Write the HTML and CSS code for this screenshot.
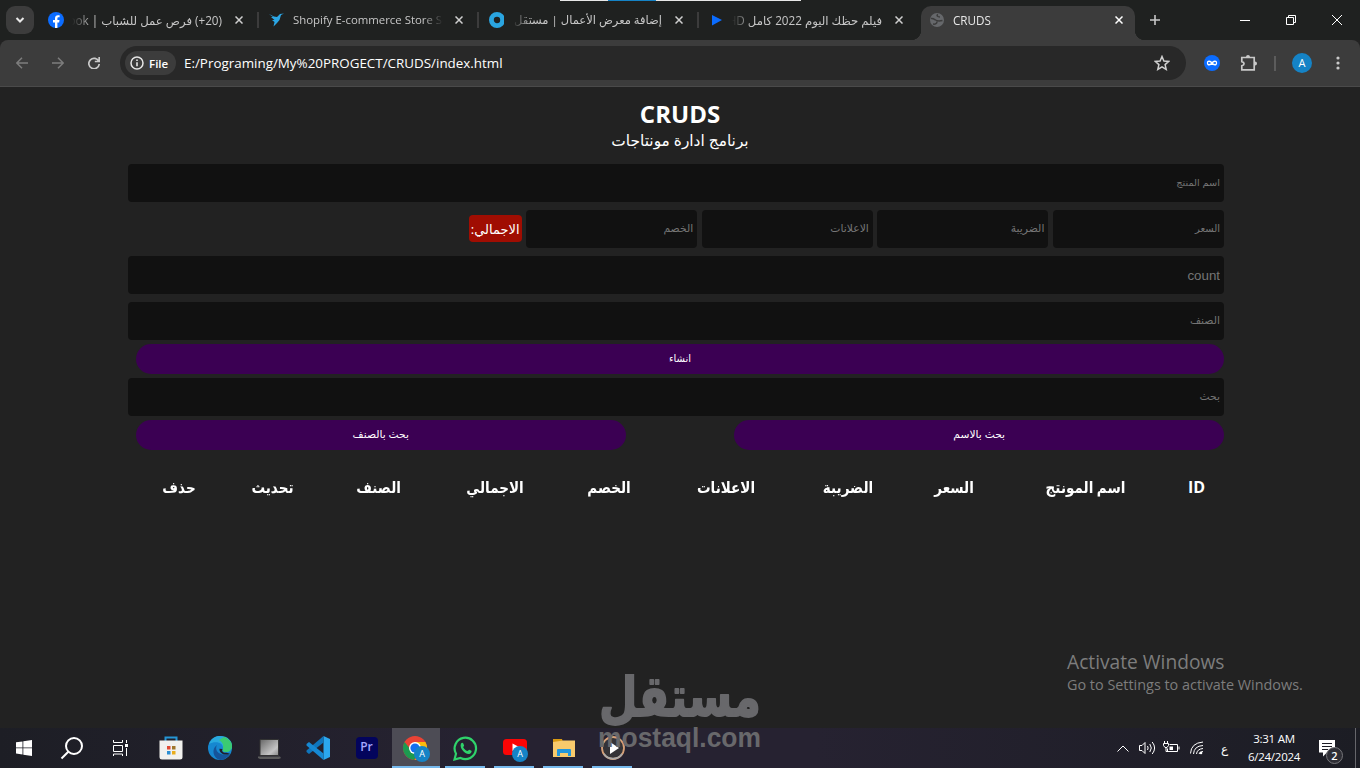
FILE: index.html
```
<!DOCTYPE html>
<html lang="ar">
<head>
    <meta charset="UTF-8">
    <meta name="viewport" content="width=device-width, initial-scale=1.0">
    <title>CRUDS</title>
    <link rel="stylesheet" href="styles.css">
</head>
<body>
    <div class="screen">
        <!-- tabs -->
        <div class="tabs">
            <div class="tab-search">
                <svg width="28" height="28" viewBox="0 0 28 28"><path d="M10.500 12l3.500 3.500 3.500-3.500" fill="none" stroke="#e8e8e8" stroke-width="2"/></svg>
            </div>
            <div class="tab">
                <svg class="favicon" viewBox="0 0 16 16"><circle cx="8" cy="8" r="8" fill="#0b6cff"/><path d="M7 16v-5.600H5V8h2V6.400C7 4.200 8.200 3.200 10 3.200l1.600.1v2h-1c-.9 0-1.200.5-1.200 1.200V8h2.100l-.4 2.400H9.400V16z" fill="#fff"/></svg>
                <span class="tab-title rtl t1" dir="rtl">(20+) فرص عمل للشباب | Facebook</span>
                <svg class="close" viewBox="0 0 8 8"><path d="M.5.5l7 7M7.500.5l-7 7"/></svg>
            </div>
            <div class="tab">
                <svg class="favicon" viewBox="0 0 16 16"><path d="M1 2l5 2.500L9 5l3-3 4-.5-3 1.500L11.500 8 9 11l-3.500 3.500L6.500 10 4 8h2.500L3 5h2z" fill="#2ba7e6"/></svg>
                <span class="tab-title t2">Shopify E-commerce Store Setup</span>
                <svg class="close" viewBox="0 0 8 8"><path d="M.5.5l7 7M7.500.5l-7 7"/></svg>
            </div>
            <div class="tab">
                <svg class="favicon" viewBox="0 0 16 16"><circle cx="9" cy="8" r="5.600" fill="none" stroke="#2aa5e0" stroke-width="4.800"/></svg>
                <span class="tab-title rtl t3" dir="rtl">إضافة معرض الأعمال | مستقل</span>
                <svg class="close" viewBox="0 0 8 8"><path d="M.5.5l7 7M7.500.5l-7 7"/></svg>
            </div>
            <div class="tab no-line">
                <svg class="favicon" viewBox="0 0 16 16"><path d="M4 3l10 5-10 5.500z" fill="#0b6cff"/></svg>
                <span class="tab-title rtl t4" dir="rtl">فيلم حظك اليوم 2022 كامل HD</span>
                <svg class="close" viewBox="0 0 8 8"><path d="M.5.5l7 7M7.500.5l-7 7"/></svg>
            </div>
            <div class="tab active">
                <svg class="favicon" viewBox="0 0 16 16"><circle cx="8" cy="8" r="7" fill="#66686b"/><path d="M2 6.500c2-.5 3 .5 4.500 1.500S11 9 13.500 8.500M4 12c2.500.5 4-.5 4-2.500M9 2.500C7 3.500 8.500 5 11 5" fill="none" stroke="#3c3c3c" stroke-width="1.500"/></svg>
                <span class="tab-title t5">CRUDS</span>
                <svg class="close" viewBox="0 0 8 8"><path d="M.5.5l7 7M7.500.5l-7 7"/></svg>
            </div>
            <svg class="new-tab" viewBox="0 0 12 12"><path d="M6 1v10M1 6h10" fill="none" stroke="#c7c7c7" stroke-width="1.600"/></svg>
            <div class="window-buttons">
                <svg width="10" height="10" viewBox="0 0 10 10"><path d="M0 5.500h10"/></svg>
                <svg width="10" height="10" viewBox="0 0 10 10"><path d="M.5 2.500h7v7h-7zM2.500 2.500v-2h7v7h-2"/></svg>
                <svg width="10" height="10" viewBox="0 0 10 10"><path d="M0 0l10 10M10 0L0 10"/></svg>
            </div>
            <div class="loading-strip"><i></i></div>
        </div>

        <!-- toolbar -->
        <div class="toolbar">
            <svg class="nav" viewBox="0 0 12 12"><path d="M12 6H1M6 .8L.8 6 6 11.200" stroke="#7d7d7d"/></svg>
            <svg class="nav" viewBox="0 0 12 12"><path d="M0 6h11M6 .8L11.200 6 6 11.200" stroke="#7d7d7d"/></svg>
            <svg class="nav" viewBox="0 0 12 12"><path d="M10.800 4.500A5.200 5.200 0 1 0 11.200 7M11.200 0v4.500H6.800" stroke="#c9c9c9" stroke-width="1.700"/></svg>
            <div class="address">
                <div class="file-chip">
                    <svg width="14" height="14" viewBox="0 0 14 14"><circle cx="7" cy="7" r="6" fill="none" stroke="#e6e6e6" stroke-width="1.500"/><path d="M7 6.200v4M7 3.500v1.500" stroke="#e6e6e6" stroke-width="1.600"/></svg>
                    <span>File</span>
                </div>
                <span class="url">E:/Programing/My%20PROGECT/CRUDS/index.html</span>
                <svg class="star" viewBox="0 0 16 16"><path d="M8 1.500l1.900 4.500 4.900.4-3.700 3.200 1.100 4.800L8 11.800l-4.200 2.600 1.100-4.800L1.200 6.400 6.100 6z" fill="none" stroke="#d0d0d0" stroke-width="1.500"/></svg>
            </div>
            <div class="toolbar-icons">
                <svg width="16" height="16" viewBox="0 0 16 16"><circle cx="8" cy="8" r="8" fill="#0b6cff"/><path d="M8 8C6.500 6 3.500 5.300 3.500 8S6.500 10 8 8s4.500-2.700 4.500 0S9.500 10 8 8z" fill="none" stroke="#fff" stroke-width="1.300"/></svg>
                <svg class="puzzle" width="18" height="18" viewBox="0 0 18 18"><path d="M1.800 3.500h12.400v12.300H1.800v-4c3-.8 3-3.500 0-4.200z" fill="none" stroke="#c9c9c9" stroke-width="1.700"/><path d="M6 3a2 2 0 0 1 4 0zM15 7.500a2 2 0 0 1 0 4z" fill="#c9c9c9"/></svg>
                <span class="divider"></span>
                <span class="avatar">A</span>
                <svg class="dots" width="4" height="14" viewBox="0 0 4 14"><g fill="#c9c9c9"><circle cx="2" cy="2" r="1.600"/><circle cx="2" cy="7" r="1.600"/><circle cx="2" cy="12" r="1.600"/></g></svg>
            </div>
        </div>

        <!-- page -->
        <div class="crud" dir="rtl">
            <div class="head">
                <h1>CRUDS</h1>
                <p>برنامج ادارة مونتاجات</p>
            </div>
            <div class="inputs">
                <input type="text" id="title" placeholder="اسم المنتج">
                <div class="price">
                    <input type="text" id="price" placeholder="السعر">
                    <input type="text" id="taxes" placeholder="الضريبة">
                    <input type="text" id="ads" placeholder="الاعلانات">
                    <input type="text" id="discount" placeholder="الخصم">
                    <small id="total">الاجمالي:</small>
                </div>
                <input type="text" id="count" placeholder="count">
                <input type="text" id="category" placeholder="الصنف">
                <button id="submit">انشاء</button>
            </div>
            <div class="outputs">
                <input type="text" id="search" placeholder="بحث">
                <div class="btnSearch">
                    <button id="searchTitle">بحث بالاسم</button>
                    <button id="searchCategory">بحث بالصنف</button>
                </div>
                <table>
                    <colgroup>
                        <col class="c1"><col class="c2"><col class="c3"><col class="c4"><col class="c5">
                        <col class="c6"><col class="c7"><col class="c8"><col class="c9"><col class="c10">
                    </colgroup>
                    <tr>
                        <th class="id">ID</th>
                        <th>اسم المونتج</th>
                        <th>السعر</th>
                        <th>الضريبة</th>
                        <th>الاعلانات</th>
                        <th>الخصم</th>
                        <th>الاجمالي</th>
                        <th>الصنف</th>
                        <th>تحديث</th>
                        <th>حذف</th>
                    </tr>
                </table>
            </div>
        </div>

        <!-- taskbar -->
        <div class="taskbar">
            <div class="task start"><svg width="16" height="16" viewBox="0 0 16 16" fill="#fff"><path d="M0 2.300L6.500 1.400v6.100H0zM7.300 1.300L16 0v7.500H7.300zM0 8.300h6.500v6.200L0 13.600zM7.300 8.300H16V16l-8.700-1.300z"/></svg></div>
            <div class="task start"><svg width="24" height="24" viewBox="0 0 24 24" fill="none" stroke="#fff" stroke-width="2"><circle cx="14" cy="10" r="8"/><path d="M8.300 15.700L1.500 22.500"/></svg></div>
            <div class="task start"><svg width="17" height="16" viewBox="0 0 17 16" fill="none" stroke="#fff"><path d="M1.500 0v2.500h9V0M1.500 5.500h9v6h-9zM1.500 16v-2h9v2M14.500 0v3M14.500 8v8"/><path d="M13 4h3v3h-3z" fill="#fff" stroke="none"/></svg></div>
            <div class="task gap"><svg width="24" height="24" viewBox="0 0 24 24"><path d="M6.500 6V1.500h11V6" fill="none" stroke="#2596d6" stroke-width="2"/><path d="M.5 4.500h23V21q0 2.500-2.500 2.500H3Q.5 23.500.5 21z" fill="#f1f1ee"/><path d="M8 10h3.500v3.500H8z" fill="#e04a34"/><path d="M13 10h3.500v3.500H13z" fill="#9f762a"/><path d="M8 15h3.500v3.500H8z" fill="#2d8fd2"/><path d="M13 15h3.500v3.500H13z" fill="#e9ad1b"/></svg></div>
            <div class="task"><svg width="24" height="24" viewBox="0 0 24 24"><circle cx="12" cy="12" r="12" fill="#1687d0"/><path d="M1 8C4 1 8 0 12 0c8 0 12 5 12 10 0 4-3 6-6 6-3-.2-4-1-3-3C16 7 8 4 1 8z" fill="#29a9de"/><path d="M16 1c6 2 8 6 8 9 0 4-3 6-6 6-3-.2-4-1-3-3 1-5-1-7-4-9z" fill="#3bcb72"/><path d="M9 9c-3 5 2 12 13 9-3 5-8 6-10 6-7-2-9-11-3-15z" fill="#15549a"/><path d="M14.500 13c-1 2 0 4 4 3.700l3.500 1c-6 2.600-11-1-10.500-5z" fill="#211f2d"/></svg></div>
            <div class="task"><svg width="24" height="24" viewBox="0 0 24 24"><defs><linearGradient id="lap" x2="1" y2="1"><stop stop-color="#666"/><stop offset=".7" stop-color="#c4c4c4"/><stop offset="1" stop-color="#888"/></linearGradient></defs><path d="M3 3.500h18.500v16H3z" fill="url(#lap)" stroke="#333"/><path d="M1 20.500h22l1 1.500-2 1H3l-2-1z" fill="#5c5c5c"/></svg></div>
            <div class="task"><svg width="24" height="24" viewBox="0 0 24 24"><path d="M17.500 0L24 3v18l-6.500 3z" fill="#2ba7ee"/><path d="M17.500 0v6.500L3 18 .5 16v-1.500L17.500 0z" fill="#0f75bc"/><path d="M.5 8L3 6l14.500 11.500V24L.5 9.500z" fill="#1688d2"/></svg></div>
            <div class="task"><span class="premiere">Pr</span></div>
            <div class="task open current"><svg width="26" height="26" viewBox="0 0 26 26"><circle cx="12" cy="13" r="12" fill="#e94335"/><path d="M1.600 7A12 12 0 0 0 11 25l5-9-8-1z" fill="#1c9a50"/><path d="M22.400 7H12l5 9-5 9A12 12 0 0 0 22.400 7z" fill="#fbbc0c"/><circle cx="12" cy="13" r="6" fill="#fff"/><circle cx="12" cy="13" r="4.600" fill="#146ff0"/></svg><span class="badge">A</span></div>
            <div class="task open"><svg width="25" height="25" viewBox="0 0 25 25"><path d="M1.500 23.500L3 17.700A10.700 10.700 0 1 1 7.500 22z" fill="none" stroke="#2fd36b" stroke-width="2.200"/><path d="M8 7.500c1-1 2-.9 2.300 0l.8 2c.1.500-.9 1.300-.9 1.700 1 2 2.200 3 4.200 3.900.7 0 1.300-1.500 1.900-1.300l2.100 1c.7.400-.4 3-2.200 3.100C12 18.500 6 12 8 7.500z" fill="#2fd36b"/></svg></div>
            <div class="task open"><svg width="26" height="26" viewBox="0 0 26 26"><rect x="1" y="4" width="24" height="16" rx="3.500" fill="#fa0505"/><path d="M10.500 8.500l7 3.800-7 3.700z" fill="#fff"/></svg><span class="badge">A</span></div>
            <div class="task open"><svg width="24" height="24" viewBox="0 0 24 24"><path d="M1 3h9l1 3H1z" fill="#d99a12"/><path d="M1 6l10-1.500h12V21H1z" fill="#f8ca6c"/><path d="M5 20v-6q0-1 1-1h12q1 0 1 1v6h-3v-3H8v3z" fill="#2296db"/></svg></div>
            <div class="task open"><svg width="24" height="24" viewBox="0 0 24 24"><circle cx="12" cy="12" r="11" fill="#343337" stroke="#d8a178" stroke-width="1.800"/><path d="M3 18a11 11 0 0 0 18 0" fill="none" stroke="#aaa" stroke-width="1.800"/><path d="M9 6l9 6-9 6z" fill="#fff"/></svg></div>

            <div class="tray">
                <svg width="12" height="7" viewBox="0 0 12 7"><path d="M.5 6.500L6 1l5.500 5.500"/></svg>
                <svg class="sound" width="17" height="14" viewBox="0 0 17 14"><path d="M.5 4.500h2.500l3-3v11l-3-3H.5zM8.500 5q1.300 2 0 4M10.800 3q3 4 0 8M13.200 1q4.800 6 0 12"/></svg>
                <svg class="battery" width="17" height="14" viewBox="0 0 17 14"><path d="M6.500 3.500h8v7h-10v-3M16 5.500v3M1.500 0v3M4.500 0v3M.5 2.500h5v2l-1.500 2H2l-1.500-2zM3 6.500v4h2"/><path d="M6.500 5.500H10v3.500H6.500z" fill="#fff" stroke="none"/></svg>
                <svg class="wifi" width="14" height="14" viewBox="0 0 14 14"><path d="M.5 12.500Q1 2 13 1M3.500 13Q4 5 13 4.500M6.500 13Q7 8 13 7.500M9 13q.5-2.500 4-2.500"/><circle cx="11" cy="12" r="1.300" fill="#fff" stroke="none"/></svg>
                <span class="lang">ع</span>
                <div class="clock">
                    <span>3:31 AM</span>
                    <span>6/24/2024</span>
                </div>
                <div class="notes">
                    <svg width="16" height="17" viewBox="0 0 16 17"><path d="M0 0h16v12.500H8l-4 4v-4H0z" fill="#fff" stroke="none"/><path d="M3 3.500h10M3 6.500h10M3 9.500h6" stroke="#1d1d25"/></svg>
                    <span class="count">2</span>
                </div>
                <span class="show-desktop"></span>
            </div>
        </div>

        <!-- overlays -->
        <div class="activate">
            <strong>Activate Windows</strong>
            <span>Go to Settings to activate Windows.</span>
        </div>
        <svg class="watermark" width="168" height="80" viewBox="0 0 168 80">
            <text class="wm-ar" x="84" y="34.500" transform="scale(1 1.220)" text-anchor="middle" textLength="162" lengthAdjust="spacingAndGlyphs">مستقل</text>
            <text class="wm-en" x="2" y="73" textLength="163" lengthAdjust="spacingAndGlyphs">mostaql.com</text>
        </svg>
    </div>
</body>
</html>
```
FILE: styles.css
```
* {
    margin: 0;
    box-sizing: border-box;
}

body {
    background: #222;
    color: #fff;
    font-family: "Open Sans", "Noto Sans", "DejaVu Sans", sans-serif;
    overflow: hidden;
}

svg {
    display: block;
    flex: none;
}

.screen {
    position: relative;
    display: flex;
    flex-direction: column;
    width: 1360px;
    height: 768px;
}

/* Tabs */
.tabs {
    position: relative;
    display: flex;
    height: 40px;
    background: #1f2120;
    font-size: 11.7px;
}

.tab-search {
    width: 28px;
    height: 28px;
    margin: 6px 4px 0 6px;
    border-radius: 9px;
    background: #3c3c3c;
}

.tab {
    position: relative;
    display: flex;
    align-items: center;
    width: 220px;
    height: 40px;
    padding-left: 10px;
    color: #c7c7c7;
}

.tab:not(.active):not(.no-line)::after {
    content: "";
    position: absolute;
    right: -1px;
    top: 12px;
    width: 2px;
    height: 16px;
    background: #3c3c3c;
}

.favicon {
    width: 16px;
    height: 16px;
}

.tab-title {
    width: 150px;
    margin: 0 12px 0 9px;
    line-height: 20px;
    white-space: nowrap;
    overflow: hidden;
    -webkit-mask-image: linear-gradient(to left, transparent, #000 20px);
    mask-image: linear-gradient(to left, transparent, #000 20px);
}

.tab-title.rtl {
    margin: 0 13px 0 8px;
    -webkit-mask-image: linear-gradient(to right, transparent, #000 20px);
    mask-image: linear-gradient(to right, transparent, #000 20px);
}

.t2 {
    font-size: 11.4px;
}

.t3 {
    font-size: 11.5px;
}

.close {
    width: 8px;
    height: 8px;
    fill: none;
    stroke: #d0d0d0;
    stroke-width: 1.5;
}

.active {
    width: 214px;
    height: 34px;
    margin: 6px 0 0 3px;
    padding: 0 0 6px 8px;
    border-radius: 10px 10px 0 0;
    background: #3c3c3c;
    color: #e8e8e8;
}

.active::before,
.active::after {
    content: "";
    position: absolute;
    bottom: 0;
    width: 10px;
    height: 10px;
}

.active::before {
    left: -10px;
    background: radial-gradient(circle at 0 0, transparent 10px, #3c3c3c 10.5px);
}

.active::after {
    right: -10px;
    background: radial-gradient(circle at 100% 0, transparent 10px, #3c3c3c 10.5px);
}

.active .close {
    stroke: #fff;
}

.t5 {
    margin-left: 8px;
    margin-right: 12px;
}

.new-tab {
    width: 12px;
    height: 12px;
    margin: 14px 0 0 14px;
}

.window-buttons {
    display: flex;
    gap: 36px;
    margin: 15px 18px 0 auto;
    fill: none;
    stroke: #fff;
    stroke-width: 1;
}

.loading-strip {
    position: absolute;
    left: 560px;
    top: 0;
    width: 241px;
    height: 1px;
    background: #e8e8e8;
}

.loading-strip i {
    display: block;
    width: 48px;
    height: 1px;
    margin-left: 48px;
    background: #1583c6;
}

/* Toolbar */
.toolbar {
    display: flex;
    align-items: center;
    height: 47px;
    padding: 0 0 0 16px;
    border-bottom: 1px solid #4a4a4a;
    border-radius: 8px 8px 0 0;
    background: #3c3c3c;
}

.nav {
    width: 12px;
    height: 12px;
    margin-right: 24px;
    fill: none;
    stroke-width: 1.5;
}

.address {
    display: flex;
    flex: none;
    align-items: center;
    width: 1066px;
    height: 34px;
    margin-left: -4px;
    padding: 0 16px 0 5px;
    border-radius: 17px;
    background: #282828;
    font-size: 13.4px;
}

.file-chip {
    display: flex;
    align-items: center;
    gap: 5px;
    width: 51px;
    height: 24px;
    padding-left: 5px;
    border-radius: 12px;
    background: #3c3c3c;
    font-size: 11.5px;
    font-weight: 600;
}

.url {
    margin-left: 8px;
}

.star {
    width: 16px;
    height: 16px;
    margin-left: auto;
}

.toolbar-icons {
    display: flex;
    align-items: center;
    margin-left: 18px;
}

.puzzle {
    margin-left: 20px;
}

.divider {
    width: 2px;
    height: 15px;
    margin-left: 16px;
    background: #5c5c5c;
}

.avatar {
    width: 20px;
    height: 20px;
    margin: 0 24px 0 16px;
    border-radius: 50%;
    background: #1583c6;
    font-size: 11px;
    line-height: 20px;
    text-align: center;
}

/* Page */
.crud {
    flex: 1;
    width: 80%;
    margin: 0 auto;
}

.head {
    padding-top: 11px;
    text-align: center;
}

h1 {
    font-size: 24px;
    line-height: 31px;
}

.head p {
    height: 23px;
    font-size: 15.4px;
    line-height: 24px;
}

.inputs,
.outputs {
    margin-left: -8px;
}

input {
    display: block;
    width: 100%;
    height: 38px;
    margin: 8px 0;
    padding: 3px 4px 5px;
    border: none;
    outline: none;
    border-radius: 4px;
    background: #111;
    color: #fff;
    font-family: "Liberation Sans", "Open Sans", "DejaVu Sans", sans-serif;
    font-size: 10.8px;
}

#title {
    margin-top: 12px;
    font-size: 9.8px;
}

#price {
    font-size: 10px;
}

#count {
    padding: 4px;
    font-size: 13.33px;
}

input::placeholder {
    color: #757575;
}

.price {
    display: flex;
    align-items: center;
    gap: 4.6px;
    height: 38px;
}

.price input {
    width: 171px;
    margin: 0;
}

#total {
    width: 53px;
    height: 27px;
    margin-bottom: 1px;
    border-radius: 4px;
    background: #a00d02;
    font-size: 13px;
    line-height: 28px;
    text-align: center;
    white-space: nowrap;
}

#category {
    margin-bottom: 4px;
}

button {
    display: block;
    width: 1088px;
    height: 30px;
    padding-bottom: 3px;
    border: none;
    border-radius: 20px;
    background: #3b0053;
    color: #fff;
    font-family: "Liberation Sans", "Open Sans", "DejaVu Sans", sans-serif;
    font-size: 10px;
    cursor: pointer;
}

#search {
    margin: 4px 0;
}

.btnSearch {
    display: flex;
    justify-content: space-between;
    width: 1088px;
}

.btnSearch button {
    width: 45%;
    font-size: 10.7px;
}

table {
    width: 1088px;
    margin-top: 22px;
    table-layout: fixed;
    border-collapse: collapse;
}

th {
    height: 30px;
    padding: 0;
    font-size: 15.4px;
    white-space: nowrap;
    transform: scaleX(0.88);
}

.id {
    font-size: 16px;
    transform: none;
}

.c1 { width: 55px; }
.c2 { width: 167px; }
.c3 { width: 96px; }
.c4 { width: 116px; }
.c5 { width: 128px; }
.c6 { width: 106px; }
.c7 { width: 122px; }
.c8 { width: 111px; }
.c9 { width: 101px; }
.c10 { width: 86px; }

/* Taskbar */
.taskbar {
    display: flex;
    height: 40px;
    background: linear-gradient(to right, #1d1e25, #262231 35%, #262231 60%, #1c1d24);
}

.task {
    position: relative;
    display: flex;
    align-items: center;
    justify-content: center;
    width: 49px;
}

.start {
    width: 48px;
}

.gap {
    margin-left: 2px;
}

.premiere {
    width: 22px;
    height: 22px;
    border-radius: 4px;
    background: #03045c;
    color: #a6a8ff;
    font-size: 12px;
    font-weight: 600;
    line-height: 20px;
    text-align: center;
}

.open::after {
    content: "";
    position: absolute;
    left: 4px;
    bottom: 0;
    width: 40px;
    height: 2px;
    background: #76b9ed;
}

.current {
    width: 48px;
    margin: 0 1px;
    background: #4d4c55;
}

.current::after {
    left: 0;
    width: 48px;
}

.badge {
    position: absolute;
    left: 22px;
    top: 18px;
    width: 16px;
    height: 16px;
    border-radius: 50%;
    background: #1583c6;
    font-size: 9px;
    line-height: 16px;
    text-align: center;
}

.tray {
    display: flex;
    align-items: center;
    margin-left: auto;
    fill: none;
    stroke: #fff;
}

.sound {
    margin-left: 10px;
}

.battery {
    margin-left: 7px;
}

.wifi {
    margin-left: 10px;
}

.lang {
    width: 10px;
    margin-left: 17px;
    font-size: 12px;
}

.clock {
    display: flex;
    flex-direction: column;
    width: 56px;
    margin-left: 15px;
    font-size: 11.5px;
    line-height: 18px;
    letter-spacing: -0.25px;
    text-align: center;
}

.notes {
    position: relative;
    margin-left: 17px;
}

.count {
    position: absolute;
    left: 7px;
    top: 7px;
    width: 17px;
    height: 17px;
    border: 1px solid #77777b;
    border-radius: 50%;
    background: #2e2e35;
    font-size: 11px;
    font-weight: 600;
    line-height: 15px;
    text-align: center;
}

.show-desktop {
    width: 1px;
    height: 40px;
    margin: 0 4px 0 20px;
    background: #66666b;
}

/* Overlays */
.activate {
    position: absolute;
    left: 1067px;
    top: 649px;
    display: flex;
    flex-direction: column;
    color: #7d7d7d;
    white-space: nowrap;
}

.activate strong {
    font-size: 19.2px;
    font-weight: 400;
    line-height: 26px;
}

.activate span {
    font-size: 14.4px;
    line-height: 20px;
}

.watermark {
    position: absolute;
    left: 596px;
    top: 674px;
    fill: #68686b;
}

.wm-ar {
    font-family: "DejaVu Sans", sans-serif;
    font-size: 46px;
    font-weight: bold;
    stroke: #68686b;
    stroke-width: 1.5;
    stroke-linejoin: round;
}

.wm-en {
    font-family: "Liberation Sans", sans-serif;
    font-size: 27px;
    font-weight: bold;
}
```
